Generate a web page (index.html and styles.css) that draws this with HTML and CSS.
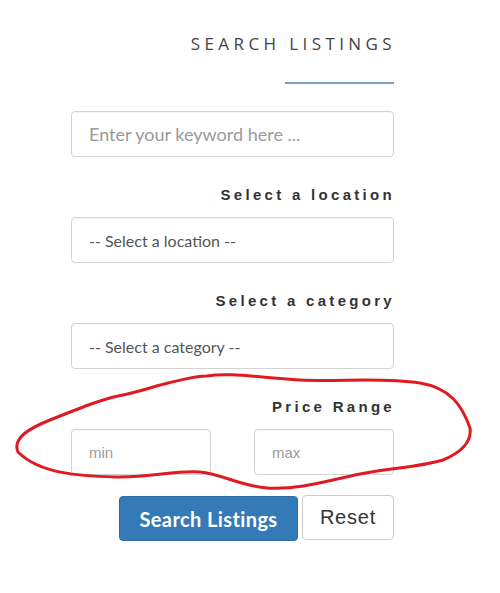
FILE: index.html
```html
<!DOCTYPE html>
<html>
<head>
<meta charset="utf-8">
<link rel="stylesheet" href="styles.css">
</head>
<body>
<div class="page">
  <form class="search">
    <h2 class="title">SEARCH LISTINGS</h2>
    <div class="rule"></div>
    <input class="field keyword" type="text" placeholder="Enter your keyword here ...">
    <label class="label">Select a location</label>
    <div class="field select">-- Select a location --</div>
    <label class="label">Select a category</label>
    <div class="field select">-- Select a category --</div>
    <label class="label">Price Range</label>
    <div class="range">
      <input class="field price" type="text" placeholder="min">
      <input class="field price" type="text" placeholder="max">
    </div>
    <div class="actions">
      <button type="button" class="btn primary">Search Listings</button>
      <button type="button" class="btn plain">Reset</button>
    </div>
  </form>
  <svg class="scribble" width="500" height="593" viewBox="0 0 500 593">
    <path d="M207 376 C 230 372, 260 378, 300 380 C 340 382, 380 377, 420 383 C 450 388, 462 405, 470 428 C 472 442, 462 452, 443 460 C 420 467, 390 468, 360 474 C 330 480, 300 490, 267 488 C 240 486, 222 474, 200 472 C 175 470, 150 478, 115 477 C 80 476, 40 474, 18 452 C 12 438, 30 428, 50 420 C 80 408, 100 400, 118 396 C 140 392, 155 386, 168 383 C 185 379, 195 376, 207 376 Z"/>
  </svg>
</div>
</body>
</html>
```
FILE: styles.css
```css
html, body {
  margin: 0;
  padding: 0;
  background: #fff;
}
.page {
  position: relative;
  width: 500px;
  height: 593px;
  overflow: hidden;
}
.search {
  width: 323px;
  margin-left: 71px;
  padding-top: 33px;
  display: flex;
  flex-direction: column;
  align-items: flex-end;
}
.title {
  margin: 0;
  font-family: "Open Sans", sans-serif;
  font-weight: 400;
  font-size: 17px;
  line-height: 22px;
  letter-spacing: 4.4px;
  margin-right: -2px;
  color: #444;
}
.rule {
  width: 109px;
  height: 2px;
  background: #7d9fc4;
  margin-top: 27px;
  margin-bottom: 27px;
}
.field {
  box-sizing: border-box;
  width: 100%;
  height: 46px;
  border: 1px solid #d2d2d2;
  border-radius: 4px;
  padding: 0 17px;
  font-family: "Lato", sans-serif;
  font-size: 16px;
  color: #555;
  background: #fff;
  outline: none;
  box-shadow: inset 0 1px 1px rgba(0,0,0,0.03);
}
.field::placeholder {
  color: #9a9a9a;
}
.keyword {
  font-size: 18px;
}
.select {
  display: flex;
  align-items: center;
  color: #555;
}
.label {
  font-family: "Liberation Sans", Arial, sans-serif;
  font-weight: 700;
  font-size: 15px;
  line-height: 20px;
  letter-spacing: 3.3px;
  margin-right: -1px;
  color: #333;
  margin-top: 28px;
  margin-bottom: 12px;
}
.range {
  width: 100%;
  display: flex;
  justify-content: space-between;
}
.price {
  width: 140px;
  font-family: "Liberation Sans", Arial, sans-serif;
  font-size: 15px;
}
.actions {
  display: flex;
  gap: 4px;
  margin-top: 21px;
}
.btn {
  height: 45px;
  border-radius: 4px;
  font-size: 20px;
  cursor: pointer;
}
.primary {
  width: 179px;
  background: #337ab7;
  border: 1px solid #2e6da4;
  color: #fff;
  font-family: "Lato", sans-serif;
  font-weight: 700;
  letter-spacing: 0.4px;
}
.plain {
  width: 92px;
  margin-top: -1px;
  background: #fff;
  border: 1px solid #ccc;
  color: #333;
  font-family: "Liberation Sans", Arial, sans-serif;
  letter-spacing: 0.8px;
}
.scribble {
  position: absolute;
  left: 0;
  top: 0;
  pointer-events: none;
}
.scribble path {
  fill: none;
  stroke: #e01a22;
  stroke-width: 3;
  stroke-linejoin: round;
}
```
